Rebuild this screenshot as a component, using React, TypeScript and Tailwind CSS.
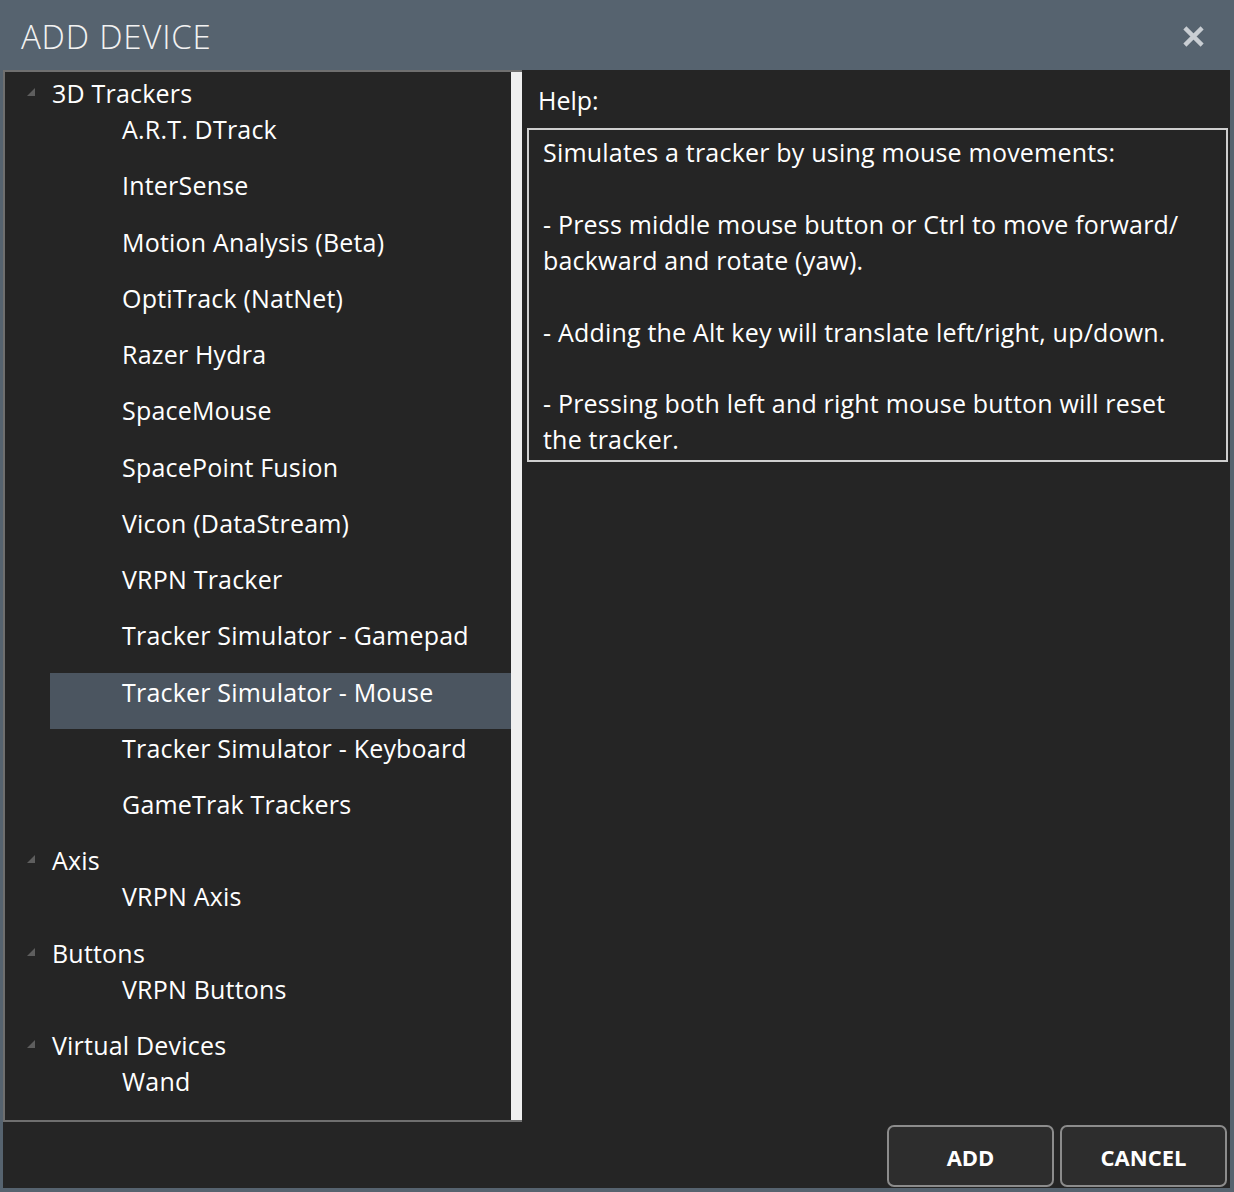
import type { ReactNode } from "react";

const groups: { name: string; items: string[] }[] = [
  {
    name: "3D Trackers",
    items: [
      "A.R.T. DTrack",
      "InterSense",
      "Motion Analysis (Beta)",
      "OptiTrack (NatNet)",
      "Razer Hydra",
      "SpaceMouse",
      "SpacePoint Fusion",
      "Vicon (DataStream)",
      "VRPN Tracker",
      "Tracker Simulator - Gamepad",
      "Tracker Simulator - Mouse",
      "Tracker Simulator - Keyboard",
      "GameTrak Trackers",
    ],
  },
  { name: "Axis", items: ["VRPN Axis"] },
  { name: "Buttons", items: ["VRPN Buttons"] },
  { name: "Virtual Devices", items: ["Wand"] },
];

const selected = "Tracker Simulator - Mouse";

function Expander() {
  // WPF-style expanded tree glyph
  return (
    <svg width="10" height="10" viewBox="0 0 10 10" className="shrink-0">
      <polygon points="9,1 9,9 1,9" fill="#5e5e5e" />
    </svg>
  );
}

function TreeGroup({ name, items }: { name: string; items: string[] }) {
  return (
    <div>
      <div className="flex h-[36px] items-start">
        <div className="flex w-[47px] justify-start pl-[21px] pt-[13px]">
          <Expander />
        </div>
        <span className="-mt-[1px] leading-[40px]">{name}</span>
      </div>
      {items.map((it) => (
        <div
          key={it}
          className={`ml-[45px] h-[56.25px] pl-[72px] leading-[38px] ${it === selected ? "bg-[#4b5560]" : ""}`}
        >
          {it}
        </div>
      ))}
    </div>
  );
}

function Button({ children }: { children: ReactNode }) {
  return (
    <button className="h-[62px] w-[167px] rounded-[7px] border-2 border-[#8c8c8c] bg-[#2d2d2d] pt-[2px] text-[22px] font-bold text-white">
      {children}
    </button>
  );
}

export default function App() {
  return (
    <div className="flex h-[1192px] w-[1234px] flex-col bg-[#56636f] font-['Open_Sans',sans-serif] text-white">
      <header className="flex h-[70px] shrink-0 items-center justify-between pl-[21px] pr-[29px]">
        <h1 className="mt-[3px] text-[33px] font-light tracking-[0.8px] text-[#f2f2f2]">ADD DEVICE</h1>
        <svg width="23" height="23" viewBox="0 0 24 24" className="mt-[2px]">
          <path d="M3 3 L21 21 M21 3 L3 21" stroke="#c9ced3" strokeWidth="4.5" />
        </svg>
      </header>
      <div className="mb-[4px] ml-[3px] mr-[4px] flex flex-1 flex-col bg-[#252525]">
        <div className="flex h-[1052px]">
          <div className="flex w-[519px] border-b-2 border-l-2 border-t-2 border-[#6f6f6f]">
            <div className="flex-1 pt-[2px] text-[25px] tracking-[0.2px]">
              {groups.map((g) => (
                <TreeGroup key={g.name} name={g.name} items={g.items} />
              ))}
            </div>
            <div className="w-[11px] bg-[#efefef]" />
          </div>
          <div className="flex-1 pl-[5px] pr-[2px]">
            <div className="pl-[11px] pt-[13px] text-[25px] leading-[34px]">Help:</div>
            <div className="mt-[11px] border-2 border-[#cfcfcf] px-[14px] pb-[2px] pt-[5px] text-[25px] leading-[35.9px] tracking-[0.2px]">
              <p>Simulates a tracker by using mouse movements:</p>
              <p>&nbsp;</p>
              <p>
                - Press middle mouse button or Ctrl to move forward/
                <br />
                backward and rotate (yaw).
              </p>
              <p>&nbsp;</p>
              <p>- Adding the Alt key will translate left/right, up/down.</p>
              <p>&nbsp;</p>
              <p>
                - Pressing both left and right mouse button will reset
                <br />
                the tracker.
              </p>
            </div>
          </div>
        </div>
        <div className="flex flex-1 items-end justify-end gap-[6px] pb-[1px] pr-[3px]">
          <Button>ADD</Button>
          <Button>CANCEL</Button>
        </div>
      </div>
    </div>
  );
}
